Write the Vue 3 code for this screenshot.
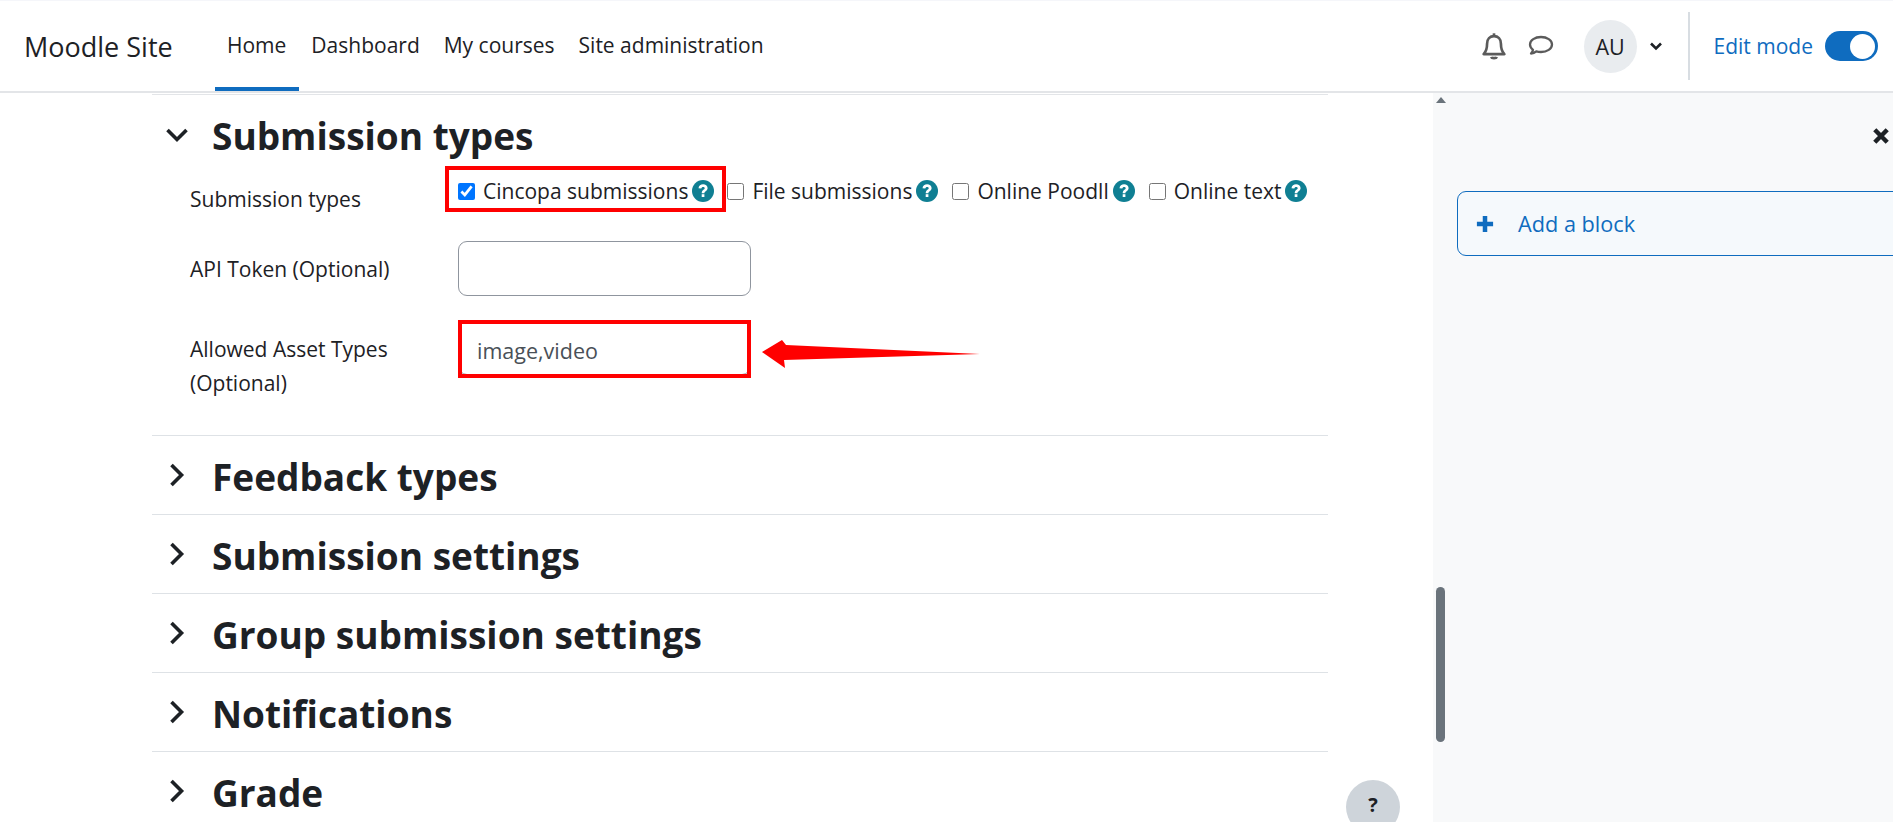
<template>
  <div class="page">
    <header class="navbar">
      <span class="brand">Moodle Site</span>
      <nav class="nav">
        <a v-for="link in links" :key="link" class="nav-link" :class="{ active: link === 'Home' }">{{ link }}</a>
      </nav>
      <div class="nav-right">
        <svg class="nav-icon" width="30" height="30" viewBox="0 0 26 26" fill="none" stroke="#5b5b5b" stroke-width="2.300">
          <path d="M4 20c2-2 3-4 3-9 0-4 2.500-6.500 6-6.500s6 2.500 6 6.500c0 5 1 7 3 9z" stroke-linejoin="round" />
          <path d="M13 2v2" />
          <path d="M10.500 22.500c.5 1.300 4.500 1.300 5 0" />
        </svg>
        <svg class="nav-icon chat" width="26" height="26" viewBox="0 0 26 26" fill="none" stroke="#5b5b5b" stroke-width="2.300">
          <path d="M13 4c-6 0-11 3.200-11 7.500 0 2.200 1.200 3.900 3 5.300-.3 1.500-1 2.700-2 3.700 2.200 0 4-.9 5.300-2.100 1.400.4 3 .6 4.700.6 6 0 11-3.200 11-7.500S19 4 13 4z" stroke-linejoin="round" />
        </svg>
        <span class="avatar">AU</span>
        <svg class="caret" width="14" height="14" viewBox="0 0 14 14" fill="none" stroke="#1d2125" stroke-width="2.600">
          <path d="M2 4.500 7 9.500l5-5" />
        </svg>
        <span class="divider"></span>
        <span class="edit-label">Edit mode</span>
        <span class="toggle"><span class="knob"></span></span>
      </div>
    </header>

    <div class="body">
      <main class="content">
        <section class="section first">
          <h3 class="section-title">
            <svg class="chev" width="26" height="26" viewBox="0 0 26 26" fill="none" stroke="#1d2125" stroke-width="3.600">
              <path d="M3.500 8 13 17.500 22.500 8" />
            </svg>
            Submission types
          </h3>
          <div class="form">
            <div class="form-row types-row">
              <div class="form-label">Submission types</div>
              <div class="checks">
                <label v-for="type in types" :key="type.name" class="check" :style="{ marginRight: type.gap + 'px' }">
                  <input type="checkbox" :checked="type.checked" />
                  <span>{{ type.name }}</span>
                  <svg class="help" width="22" height="22" viewBox="0 0 22 22">
                    <circle cx="11" cy="11" r="11" fill="#0f7f93" />
                    <path d="M6.500 8.300c.2-2.500 2.200-4 4.600-4s4.500 1.500 4.500 3.800c0 3-3.200 3-3.200 5.200H9.700c0-3.600 3-3.600 3-5.100 0-.8-.7-1.300-1.600-1.300-1 0-1.600.6-1.800 1.600z" fill="#fff" />
                    <rect x="9.700" y="14.200" width="2.700" height="2.800" fill="#fff" />
                  </svg>
                </label>
              </div>
            </div>
            <div class="form-row token-row">
              <div class="form-label">API Token (Optional)</div>
              <input class="text-input" type="text" />
            </div>
            <div class="form-row asset-row">
              <div class="form-label">Allowed Asset Types<br />(Optional)</div>
              <input class="text-input" type="text" value="image,video" />
            </div>
          </div>
        </section>
        <section v-for="title in collapsed" :key="title" class="section">
          <h3 class="section-title">
            <svg class="chev closed" width="26" height="26" viewBox="0 0 26 26" fill="none" stroke="#1d2125" stroke-width="3.600">
              <path d="M7.500 3 17.500 13 7.500 23" />
            </svg>
            {{ title }}
          </h3>
        </section>
        <button class="help-btn" type="button">?</button>

        <!-- annotations drawn on top of the screenshot -->
        <span class="mark mark-check"></span>
        <span class="mark mark-asset"></span>
        <svg class="arrow" width="218" height="30" viewBox="0 0 218 30">
          <path d="M218 14 24 5 20 0 0 12 23 28 22 20z" fill="#f00" />
        </svg>
      </main>

      <aside class="drawer">
        <span class="scroll-up"></span>
        <span class="scroll-thumb"></span>
        <svg class="close" width="16" height="16" viewBox="0 0 18 18" stroke="#1d2125" stroke-width="5">
          <path d="M2 2l14 14M16 2 2 16" />
        </svg>
        <div class="add-block">
          <svg width="18" height="18" viewBox="0 0 20 20" stroke="#0f6cbf" stroke-width="5">
            <path d="M10 1v18M1 10h18" />
          </svg>
          <span>Add a block</span>
        </div>
      </aside>
    </div>
  </div>
</template>

<script setup>
const links = ["Home", "Dashboard", "My courses", "Site administration"];

const types = [
  { name: "Cincopa submissions", checked: true, gap: 13 },
  { name: "File submissions", checked: false, gap: 14 },
  { name: "Online Poodll", checked: false, gap: 14 },
  { name: "Online text", checked: false, gap: 0 },
];

const collapsed = [
  "Feedback types",
  "Submission settings",
  "Group submission settings",
  "Notifications",
  "Grade",
];
</script>

<style>
html,
body {
  margin: 0;
  overflow: hidden;
  background: #fff;
}
</style>

<style scoped>
.page {
  height: 822px;
  overflow: hidden;
  font-family: "Open Sans", "Noto Sans", sans-serif;
  font-size: 21px;
  color: #1d2125;
}

.navbar {
  height: 90px;
  display: flex;
  align-items: center;
  padding-left: 24px;
  border-top: 1px solid #f5f6fa;
  border-bottom: 2px solid #e3e5e8;
}

.brand {
  font-size: 27px;
  width: 191px;
}

.nav {
  display: flex;
  align-self: stretch;
}

.nav-link {
  display: flex;
  align-items: center;
  padding: 2px 12px 0;
  font-size: 21px;
  border-bottom: 4px solid transparent;
}

.nav-link.active {
  border-bottom-color: #0f6cbf;
  padding-right: 13px;
}

.nav-right {
  margin-left: auto;
  display: flex;
  align-items: center;
  align-self: stretch;
  padding-right: 15px;
}

.nav-icon {
  margin-right: 19px;
}

.nav-icon.chat {
  margin-right: 30px;
}

.avatar {
  width: 53px;
  height: 53px;
  border-radius: 50%;
  background: #e9ecef;
  display: flex;
  align-items: center;
  justify-content: center;
  font-size: 21.5px;
}

.caret {
  margin-left: 12px;
}

.divider {
  width: 2px;
  height: 68px;
  background: #d8dde2;
  margin: 0 24px 0 25px;
}

.edit-label {
  color: #0f6cbf;
  font-size: 21px;
}

.toggle {
  width: 53px;
  height: 30px;
  border-radius: 15px;
  background: #0f6cbf;
  margin-left: 12px;
  display: flex;
  align-items: center;
  justify-content: flex-end;
  padding-right: 3px;
  box-sizing: border-box;
}

.knob {
  width: 25px;
  height: 25px;
  border-radius: 50%;
  background: #fff;
}

.body {
  display: flex;
  height: 729px;
}

.content {
  position: relative;
  flex: none;
  width: 1176px;
  margin: 1px 105px 0 152px;
  border-top: 1px solid #e3e5e8;
}

.section {
  height: 79px;
  border-bottom: 1px solid #dee2e6;
  box-sizing: border-box;
}

.section.first {
  height: 341px;
}

.section-title {
  margin: 0;
  height: 79px;
  box-sizing: border-box;
  display: flex;
  align-items: center;
  padding: 2px 0 0 12px;
  gap: 22px;
  font-size: 37px;
  font-weight: 700;
}

.first .section-title {
  height: 78px;
}

.chev.closed {
  position: relative;
  top: -2px;
}

.form-row {
  display: flex;
}

.form-label {
  flex: none;
  width: 306px;
  padding-left: 38px;
  box-sizing: border-box;
  line-height: 34px;
}

.types-row {
  height: 68px;
}

.types-row .form-label {
  padding-top: 9px;
}

.checks {
  display: flex;
  align-items: center;
  height: 34px;
  margin-top: 1px;
  white-space: nowrap;
}

.check {
  display: flex;
  align-items: center;
}

.check input {
  width: 17px;
  height: 17px;
  margin: 0 8px 0 0;
  accent-color: #0075ff;
}

.help {
  margin-left: 4px;
}

.token-row {
  height: 79px;
}

.token-row .form-label {
  padding-top: 11px;
}

.text-input {
  width: 293px;
  height: 55px;
  box-sizing: border-box;
  border: 1px solid #8f959e;
  border-radius: 9px;
  padding: 0 18px;
  font-family: inherit;
  font-size: 21.5px;
  color: #495057;
  background: #fff;
}

.asset-row .text-input {
  padding-top: 5px;
}

.asset-row .form-label {
  line-height: 34px;
  padding-top: 12px;
}

.mark {
  position: absolute;
  border: 4px solid #f00;
  box-sizing: border-box;
}

.mark-check {
  left: 293px;
  top: 71px;
  width: 281px;
  height: 46px;
}

.mark-asset {
  left: 306px;
  top: 225px;
  width: 293px;
  height: 58px;
}

.arrow {
  position: absolute;
  left: 610px;
  top: 245px;
}

.help-btn {
  position: absolute;
  left: 1194px;
  top: 685px;
  width: 54px;
  height: 54px;
  border: 0;
  border-radius: 50%;
  background: #ced4da;
  color: #1d2125;
  font-family: inherit;
  font-size: 20px;
  font-weight: 700;
  padding: 0 0 6px;
}

.drawer {
  position: relative;
  flex: none;
  width: 460px;
  overflow: hidden;
  background: #f8f9fa;
  padding: 98px 0 0 24px;
  box-sizing: border-box;
}

.scroll-up {
  position: absolute;
  left: 3px;
  top: 4px;
  border: 5px solid transparent;
  border-top: 0;
  border-bottom: 6px solid #6a737b;
}

.scroll-thumb {
  position: absolute;
  left: 3px;
  top: 494px;
  width: 9px;
  height: 155px;
  border-radius: 5px;
  background: #6a737b;
}

.close {
  position: absolute;
  right: 4px;
  top: 35px;
}

.add-block {
  height: 65px;
  width: 460px;
  box-sizing: border-box;
  border: 1px solid #0f6cbf;
  border-radius: 9px;
  background: #f5f9fc;
  color: #0f6cbf;
  font-size: 21.7px;
  display: flex;
  align-items: center;
  gap: 24px;
  padding-left: 18px;
}
</style>
